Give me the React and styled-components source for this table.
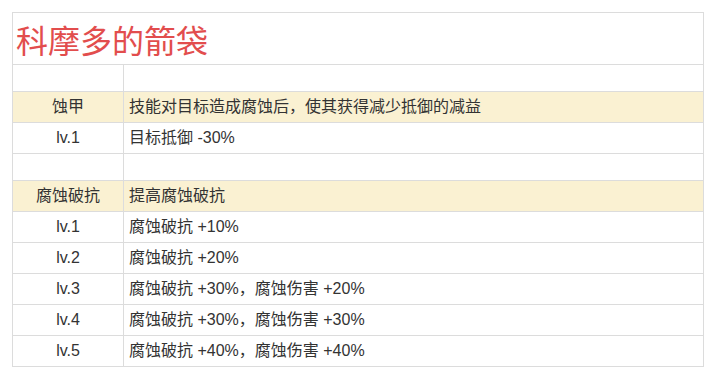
import React from 'react';
import styled, { createGlobalStyle } from 'styled-components';

const GlobalStyle = createGlobalStyle`
  body {
    margin: 0;
    background: #fff;
    font-family: "Liberation Sans", "Noto Sans CJK SC", sans-serif;
  }
`;

const Page = styled.div`
  padding: 12px;
`;

const Table = styled.table`
  width: 692px;
  border-collapse: collapse;
  table-layout: fixed;
  color: #333;
  font-size: 16px;
`;

const Cell = styled.td`
  border: 1px solid #dcdcdc;
  padding: 0 5px;
  height: ${(p) => p.$h || 30}px;
  text-align: ${(p) => (p.$center ? 'center' : 'left')};
  background: ${(p) => (p.$head ? '#faf1d2' : '#fff')};
  white-space: nowrap;
  line-height: 1;
`;

const TitleCell = styled.td`
  border: 1px solid #dcdcdc;
  height: 51px;
  padding: 0 3px;
  color: #e24d4d;
  font-size: 32px;
  font-family: "Noto Sans CJK SC", sans-serif;
  line-height: 1;
`;

const sections = [
  {
    name: '蚀甲',
    desc: '技能对目标造成腐蚀后，使其获得减少抵御的减益',
    levels: ['目标抵御 -30%'],
  },
  {
    name: '腐蚀破抗',
    desc: '提高腐蚀破抗',
    levels: [
      '腐蚀破抗 +10%',
      '腐蚀破抗 +20%',
      '腐蚀破抗 +30%，腐蚀伤害 +20%',
      '腐蚀破抗 +30%，腐蚀伤害 +30%',
      '腐蚀破抗 +40%，腐蚀伤害 +40%',
    ],
  },
];

const App = () => (
  <Page>
    <GlobalStyle />
    <Table>
      <colgroup>
        <col style={{ width: 111 }} />
        <col />
      </colgroup>
      <tbody>
        <tr>
          <TitleCell colSpan={2}>科摩多的箭袋</TitleCell>
        </tr>
        {sections.map((s) => (
          <React.Fragment key={s.name}>
            <tr>
              <Cell $h={26} />
              <Cell $h={26} />
            </tr>
            <tr>
              <Cell $head $center>{s.name}</Cell>
              <Cell $head>{s.desc}</Cell>
            </tr>
            {s.levels.map((l, i) => (
              <tr key={i}>
                <Cell $center>lv.{i + 1}</Cell>
                <Cell>{l}</Cell>
              </tr>
            ))}
          </React.Fragment>
        ))}
      </tbody>
    </Table>
  </Page>
);

export default App;
